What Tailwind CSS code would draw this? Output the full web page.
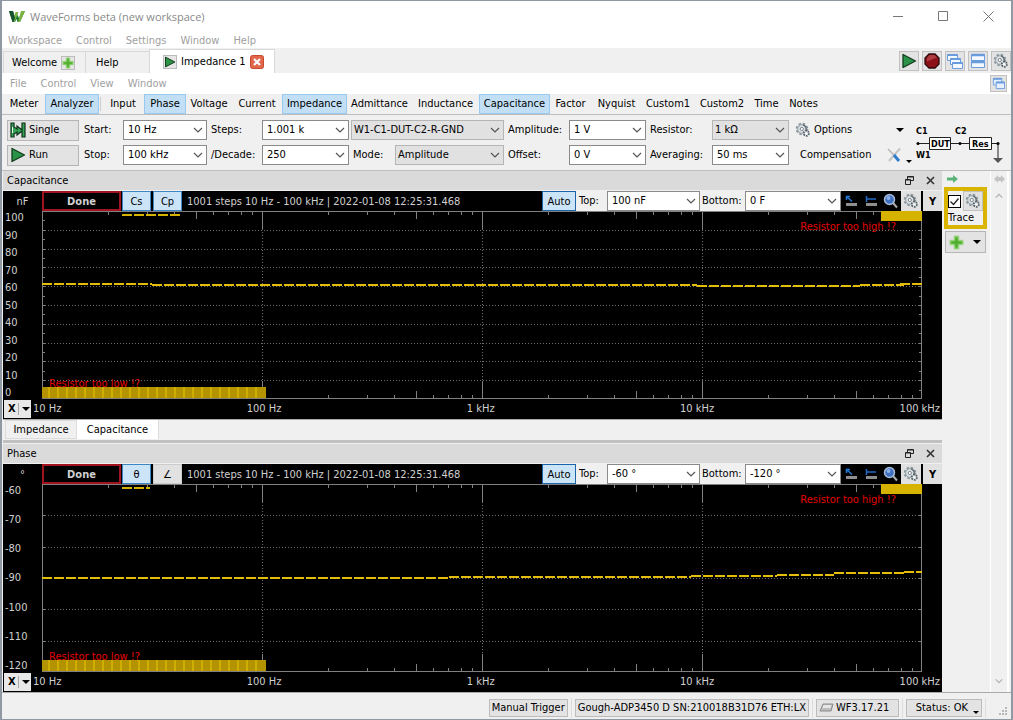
<!DOCTYPE html>
<html lang="en">
  <head>
    <meta charset="UTF-8" />
    <meta name="viewport" content="width=device-width, initial-scale=1.0" />
    <script src="https://cdn.jsdelivr.net/npm/@tailwindcss/browser@4"></script>
    <title>WaveForms beta (new workspace)</title>
  </head>
  <body
    class="flex min-h-screen flex-col border-t border-r-2 border-b border-l-2 border-[#8f98a3] bg-[#f0f0f0] font-['DejaVu_Sans_Condensed','DejaVu_Sans',sans-serif] text-[11px] leading-4 text-black"
  >
    <!-- shared icons -->
    <svg class="hidden">
      <symbol id="chevron" viewBox="0 0 10 6">
        <path d="M1 1l4 4 4-4" fill="none" stroke="#555" stroke-width="1.2" />
      </symbol>
      <symbol id="caret" viewBox="0 0 8 4">
        <path d="M0 0h8L4 4z" />
      </symbol>
      <symbol id="play" viewBox="0 0 16 16">
        <path d="M2 1.500L14.500 8 2 14.500z" fill="#2b9348" stroke="#123c1c" stroke-width="1.300" stroke-linejoin="round" />
      </symbol>
      <symbol id="single" viewBox="0 0 16 16">
        <path d="M1 1h3v4l3 2V4l5 4V1h3v14h-3V9l-5 4v-3l-3 2v3H1z" fill="#35a355" stroke="#10301a" stroke-width="1.200" />
        <path d="M2.500 5v6" stroke="#e8f6ec" />
      </symbol>
      <symbol id="stop" viewBox="0 0 16 16">
        <path d="M5 1h6l4 4v6l-4 4H5l-4-4V5z" fill="#8c1118" stroke="#2c0c0e" stroke-width="1.300" />
        <path d="M5.500 2h5l2.500 2.500-10 4V5z" fill="#c65a5e" opacity=".6" />
      </symbol>
      <symbol id="gear" viewBox="0 0 16 16">
        <circle cx="7" cy="7" r="5.200" fill="#cfd6da" stroke="#8d989e" stroke-width="2.200" stroke-dasharray="2.400 1.700" />
        <circle cx="7" cy="7" r="4.300" fill="#dbe1e4" stroke="#9aa5ab" />
        <path d="M8 2.800a4.300 4.300 0 0 1 3 5.500" fill="none" stroke="#5d686e" stroke-width="1.300" />
        <circle cx="6.800" cy="7" r="1.600" fill="#fff" stroke="#7a858b" />
        <circle cx="11.300" cy="11.300" r="2.600" fill="#e3e8ea" stroke="#566168" stroke-width="1.800" stroke-dasharray="1.700 1" />
        <circle cx="11.300" cy="11.300" r="1" fill="#fff" />
      </symbol>
      <symbol id="plus" viewBox="0 0 16 16">
        <path d="M5.500 1h5v4.500H15v5h-4.500V15h-5v-4.500H1v-5h4.500z" fill="#6cc04a" stroke="#a9dc94" stroke-width="1" />
        <path d="M8 3v10M3 8h10" stroke="#4fae2e" stroke-width="2" />
      </symbol>
      <symbol id="cascade" viewBox="0 0 16 16">
        <g fill="#f4f9ff" stroke="#6a9bdc">
          <path d="M.5 1.500h10v6H.5z" /><path d="M.5 2h10" stroke-width="2" />
          <path d="M3.500 5.500h10v6h-10z" /><path d="M3.500 6h10" stroke-width="2" />
          <path d="M5.500 9.500h10v6h-10z" /><path d="M5.500 10h10" stroke-width="2" />
        </g>
      </symbol>
      <symbol id="tile" viewBox="0 0 16 16">
        <g fill="#f4f9ff" stroke="#6a9bdc">
          <path d="M1.500 1.500h13v6h-13z" /><path d="M1.500 2h13" stroke-width="2.500" />
          <path d="M1.500 8.500h13v6h-13z" /><path d="M1.500 9h13" stroke-width="2.500" />
        </g>
      </symbol>
      <symbol id="windows" viewBox="0 0 14 14">
        <g fill="#e6f1ff" stroke="#6a9bdc">
          <path d="M1.500 1.500h9v7h-9z" /><path d="M1.500 2h9" stroke-width="2" />
          <path d="M4.500 5.500h9v7h-9z" /><path d="M4.500 6h9" stroke-width="2" />
        </g>
      </symbol>
      <symbol id="float" viewBox="0 0 9 9">
        <path d="M2.500 3V.5h6v4H6M2.500 1h6M.5 3.500h5v5h-5zM.5 4h5" fill="none" stroke="#222" />
      </symbol>
      <symbol id="close" viewBox="0 0 9 9">
        <path d="M1 1l7 7M8 1L1 8" stroke="#333" stroke-width="1.600" />
      </symbol>
      <symbol id="cursor-x" viewBox="0 0 14 12">
        <path d="M2.500 1.500l5.500 5M2.500 5V1.500H6" fill="none" stroke="#1f7ad6" stroke-width="1.500" />
        <path d="M2 8h11v3H2z" fill="#8f8f8f" />
      </symbol>
      <symbol id="cursor-y" viewBox="0 0 14 12">
        <path d="M2.500 1v6M2.500 4H12" fill="none" stroke="#1f6ac6" stroke-width="1.500" />
        <path d="M2 8h11v3H2z" fill="#8f8f8f" />
      </symbol>
      <symbol id="lens" viewBox="0 0 16 16">
        <path d="M10 10l4 4.500" stroke="#aaa" stroke-width="2" />
        <circle cx="6.500" cy="6.500" r="5" fill="#3f6fc0" stroke="#a8bcd8" stroke-width="1.500" />
        <circle cx="5.500" cy="5" r="2" fill="#8fb2e6" />
      </symbol>
    </svg>

    <!-- title bar -->
    <header class="flex h-[31px] items-center bg-white pl-[6px]">
      <svg class="h-[13px] w-[18px]" viewBox="0 0 18 13">
        <path d="M1 1h4l2 7 2-4 2 4 3-7h3l-5 11H9.500L8.500 9l-1.500 3H4.500z" fill="#1d7a35" />
        <path d="M7.500 2h3l-4 10H4.500zM13 1h4l-5 11h-2z" fill="#7cb342" />
        <path d="M1 1h4l2 7-1.500 4h-1z" fill="#14532d" />
      </svg>
      <h1 class="ml-1 flex-1 font-['Open_Sans',sans-serif] text-[11px] text-[#8a8a8a]">WaveForms beta (new workspace)</h1>
      <div class="flex">
        <button class="flex h-6 w-[45px] items-center justify-center" aria-label="Minimize">
          <svg class="h-[11px] w-[11px]" viewBox="0 0 11 11"><path d="M0 5.500h10" stroke="#777" /></svg>
        </button>
        <button class="flex h-6 w-[45px] items-center justify-center" aria-label="Maximize">
          <svg class="h-[11px] w-[11px]" viewBox="0 0 11 11"><path d="M.5.5h9v9h-9z" fill="none" stroke="#777" /></svg>
        </button>
        <button class="flex h-6 w-[45px] items-center justify-center" aria-label="Close">
          <svg class="h-[11px] w-[11px]" viewBox="0 0 11 11"><path d="M.5.5l10 10M10.500.5l-10 10" stroke="#777" /></svg>
        </button>
      </div>
    </header>
    <nav class="flex h-4 items-center gap-[14px] bg-white pt-[2px] pl-[6px] text-[#a0a0a0]">
      <button>Workspace</button>
      <button>Control</button>
      <button>Settings</button>
      <button>Window</button>
      <button>Help</button>
    </nav>

    <!-- instrument tabs -->
    <div class="flex h-[25px] items-stretch pl-[1px]">
      <button class="mt-[3px] flex w-[83px] items-center gap-1 border border-b-0 border-[#d9d9d9] pl-2">
        Welcome
        <span class="border border-[#bbb] bg-[#e6e6e6]"><svg class="h-3 w-3"><use href="#plus" /></svg></span>
      </button>
      <button class="mt-[3px] flex w-[63px] items-center border-t border-[#d9d9d9] pl-[10px]">Help</button>
      <button class="mt-[1px] flex w-[126px] items-center gap-1 border border-b-0 border-[#d9d9d9] bg-white pl-[13px]">
        <span class="border border-[#bbb] bg-[#e6e6e6]"><svg class="h-3 w-3"><use href="#play" /></svg></span>
        Impedance 1
        <svg class="h-[14px] w-[14px]" viewBox="0 0 14 14">
          <rect x=".5" y=".5" width="13" height="13" rx="2" fill="#e2664a" stroke="#c9492f" />
          <path d="M4 4l6 6M10 4l-6 6" stroke="#fff" stroke-width="2.200" />
        </svg>
      </button>
      <div class="ml-auto flex items-center gap-[3px] pt-[1px]">
        <button class="flex h-5 w-5 items-center justify-center border border-[#c0c0c0] bg-[#e3e3e3]" aria-label="Run all"><svg class="h-4 w-4"><use href="#play" /></svg></button>
        <button class="flex h-5 w-5 items-center justify-center border border-[#c0c0c0] bg-[#e3e3e3]" aria-label="Stop all"><svg class="h-4 w-4"><use href="#stop" /></svg></button>
        <button class="flex h-5 w-5 items-center justify-center border border-[#c0c0c0] bg-[#e3e3e3]" aria-label="Cascade"><svg class="h-4 w-4"><use href="#cascade" /></svg></button>
        <button class="flex h-5 w-5 items-center justify-center border border-[#c0c0c0] bg-[#e3e3e3]" aria-label="Tile"><svg class="h-4 w-4"><use href="#tile" /></svg></button>
        <button class="flex h-5 w-5 items-center justify-center border border-[#c0c0c0] bg-[#e3e3e3]" aria-label="Settings"><svg class="h-4 w-4"><use href="#gear" /></svg></button>
      </div>
    </div>

    <nav class="flex h-[21px] items-center gap-[14px] bg-white pr-1 pl-2 text-[#a0a0a0]">
      <button>File</button>
      <button>Control</button>
      <button>View</button>
      <button>Window</button>
      <button class="ml-auto flex h-[17px] w-[17px] items-center justify-center border border-[#c0c0c0] bg-[#e3e3e3]" aria-label="Undock"><svg class="h-[13px] w-[13px]"><use href="#windows" /></svg></button>
    </nav>

    <!-- views -->
    <div class="flex h-[21px] items-stretch border-b border-[#bdbdbd] pl-[1px]">
      <button class="w-[42px]">Meter</button>
      <button class="w-[54px] border border-[#99c9ee] bg-[#c2dff5]">Analyzer</button>
      <span class="mx-[1px] my-[3px] w-px bg-[#ccc]"></span>
      <button class="w-[42px]">Input</button>
      <button class="w-[42px] border border-[#99c9ee] bg-[#c2dff5]">Phase</button>
      <button class="w-[46px]">Voltage</button>
      <button class="w-[50px]">Current</button>
      <button class="w-[65px] border border-[#99c9ee] bg-[#c2dff5]">Impedance</button>
      <button class="w-[65px]">Admittance</button>
      <button class="w-[67px]">Inductance</button>
      <button class="w-[71px] border border-[#99c9ee] bg-[#c2dff5]">Capacitance</button>
      <button class="w-[41px]">Factor</button>
      <button class="w-[51px]">Nyquist</button>
      <button class="w-[52px]">Custom1</button>
      <button class="w-[56px]">Custom2</button>
      <button class="w-[33px]">Time</button>
      <button class="w-[41px]">Notes</button>
    </div>

    <!-- sweep settings -->
    <div class="flex h-[56px] items-center border-b border-[#bdbdbd] bg-[#f0f0f0] pl-[5px]">
      <div class="flex w-[77px] flex-col gap-1">
        <button class="flex h-[21px] w-[72px] items-center gap-[3px] border border-[#b5b5b5] bg-[#e3e3e3] pl-[2px]"><svg class="h-4 w-4"><use href="#single" /></svg>Single</button>
        <button class="flex h-[21px] w-[72px] items-center gap-[3px] border border-[#b5b5b5] bg-[#e3e3e3] pl-[2px]"><svg class="h-4 w-4"><use href="#play" /></svg>Run</button>
      </div>
      <div class="mr-1 grid grid-cols-[39px_84px] items-center gap-y-[5px]">
        <label for="start">Start:</label>
        <div class="relative">
          <select id="start" class="block h-5 w-full appearance-none border border-[#8a8a8a] bg-white pl-[4px]"><option>10 Hz</option></select>
          <svg class="pointer-events-none absolute top-[7px] right-1 h-[6px] w-[10px]"><use href="#chevron" /></svg>
        </div>
        <label for="stop-freq">Stop:</label>
        <div class="relative">
          <select id="stop-freq" class="block h-5 w-full appearance-none border border-[#8a8a8a] bg-white pl-[4px]"><option>100 kHz</option></select>
          <svg class="pointer-events-none absolute top-[7px] right-1 h-[6px] w-[10px]"><use href="#chevron" /></svg>
        </div>
      </div>
      <div class="mr-[2px] grid grid-cols-[51px_87px] items-center gap-y-[5px]">
        <label for="steps">Steps:</label>
        <div class="relative">
          <select id="steps" class="block h-5 w-full appearance-none border border-[#8a8a8a] bg-white pl-[4px]"><option>1.001 k</option></select>
          <svg class="pointer-events-none absolute top-[7px] right-1 h-[6px] w-[10px]"><use href="#chevron" /></svg>
        </div>
        <label for="decade">/Decade:</label>
        <div class="relative">
          <select id="decade" class="block h-5 w-full appearance-none border border-[#8a8a8a] bg-white pl-[4px]"><option>250</option></select>
          <svg class="pointer-events-none absolute top-[7px] right-1 h-[6px] w-[10px]"><use href="#chevron" /></svg>
        </div>
      </div>
      <div class="mr-1 flex w-[153px] flex-col gap-[5px]">
        <div class="relative">
          <select aria-label="Circuit" class="block h-5 w-full appearance-none border border-[#b5b5b5] bg-[#e1e1e1] pl-[2px]"><option>W1-C1-DUT-C2-R-GND</option></select>
          <svg class="pointer-events-none absolute top-[7px] right-1 h-[6px] w-[10px]"><use href="#chevron" /></svg>
        </div>
        <div class="flex items-center">
          <label for="mode" class="w-[44px] pl-[2px]">Mode:</label>
          <div class="relative flex-1">
            <select id="mode" class="block h-5 w-full appearance-none border border-[#b5b5b5] bg-[#e1e1e1] pl-[2px]"><option>Amplitude</option></select>
            <svg class="pointer-events-none absolute top-[7px] right-1 h-[6px] w-[10px]"><use href="#chevron" /></svg>
          </div>
        </div>
      </div>
      <div class="mr-1 grid grid-cols-[61px_77px] items-center gap-y-[5px]">
        <label for="amplitude">Amplitude:</label>
        <div class="relative">
          <select id="amplitude" class="block h-5 w-full appearance-none border border-[#8a8a8a] bg-white pl-[4px]"><option>1 V</option></select>
          <svg class="pointer-events-none absolute top-[7px] right-1 h-[6px] w-[10px]"><use href="#chevron" /></svg>
        </div>
        <label for="offset">Offset:</label>
        <div class="relative">
          <select id="offset" class="block h-5 w-full appearance-none border border-[#8a8a8a] bg-white pl-[4px]"><option>0 V</option></select>
          <svg class="pointer-events-none absolute top-[7px] right-1 h-[6px] w-[10px]"><use href="#chevron" /></svg>
        </div>
      </div>
      <div class="mr-[6px] grid grid-cols-[62px_77px] items-center gap-y-[5px]">
        <label for="resistor">Resistor:</label>
        <div class="relative">
          <select id="resistor" class="block h-5 w-full appearance-none border border-[#b5b5b5] bg-[#e1e1e1] pl-[2px]"><option>1 kΩ</option></select>
          <svg class="pointer-events-none absolute top-[7px] right-1 h-[6px] w-[10px]"><use href="#chevron" /></svg>
        </div>
        <label for="averaging">Averaging:</label>
        <div class="relative">
          <select id="averaging" class="block h-5 w-full appearance-none border border-[#8a8a8a] bg-white pl-[4px]"><option>50 ms</option></select>
          <svg class="pointer-events-none absolute top-[7px] right-1 h-[6px] w-[10px]"><use href="#chevron" /></svg>
        </div>
      </div>
      <div class="flex w-[119px] flex-col gap-[5px]">
        <button class="flex h-5 items-center gap-[3px] pr-[10px]">
          <svg class="h-4 w-4"><use href="#gear" /></svg>Options
          <svg class="ml-auto h-1 w-2"><use href="#caret" /></svg>
        </button>
        <button class="flex h-5 items-center pl-[5px]">
          Compensation
          <svg class="ml-auto h-4 w-4" viewBox="0 0 16 16">
            <path d="M14 1.500L3 14" stroke="#c4c4c4" stroke-width="2.200" />
            <path d="M2 2l6 6" stroke="#b5b5b5" stroke-width="1.500" />
            <path d="M8 8l5 6" stroke="#2f7ccc" stroke-width="3" />
          </svg>
          <svg class="mt-3 mr-[2px] ml-1 h-[3px] w-[6px]"><use href="#caret" /></svg>
        </button>
      </div>
      <svg class="h-[42px] w-[92px]" viewBox="0 0 92 42" font-family="DejaVu Sans Condensed" font-size="9" font-weight="bold">
        <path d="M4 21.500h11M37 21.500h18M77 21.500h7v16" fill="none" stroke="#222" />
        <path d="M15.500 15.500h21v12h-21zM55.500 15.500h22v12h-22z" fill="#fff" stroke="#222" />
        <path d="M79 36h10l-5 5z" fill="#555" />
        <circle cx="4" cy="21.500" r="1.500" /><circle cx="46" cy="21.500" r="1.500" /><circle cx="84" cy="21.500" r="1.500" />
        <text x="2" y="12">C1</text>
        <text x="41" y="12">C2</text>
        <text x="2" y="36">W1</text>
        <text x="17" y="25">DUT</text>
        <text x="58" y="25">Res</text>
      </svg>
    </div>

    <main class="flex flex-1">
      <div class="flex min-w-0 flex-1 flex-col pl-[1px]">
        <!-- capacitance -->
        <section class="flex flex-1 flex-col">
          <div class="flex h-5 items-center gap-3 border-b border-[#f0f0f0] bg-[#dadada] pr-[7px] pl-1">
            <h2 class="flex-1 pt-[1px]">Capacitance</h2>
            <button aria-label="Float"><svg class="h-[9px] w-[9px]"><use href="#float" /></svg></button>
            <button aria-label="Close"><svg class="h-[9px] w-[9px]"><use href="#close" /></svg></button>
          </div>
          <div class="flex h-5 items-stretch bg-black text-[#d0d0d0]">
            <span class="w-[39px] pt-[3px] text-center">nF</span>
            <span class="w-[79px] border-2 border-[#a3121f] pt-[1px] text-center font-bold">Done</span>
            <button class="ml-[1px] w-[29px] border border-[#3c86c4] bg-[#cce4f7] pt-[1px] text-black">Cs</button>
            <button class="ml-[2px] w-[29px] border border-[#3c86c4] bg-[#cce4f7] pt-[1px] text-black">Cp</button>
            <span class="ml-[5px] flex-1 pt-[3px] whitespace-nowrap">1001 steps 10 Hz - 100 kHz | 2022-01-08 12:25:31.468</span>
            <button class="w-[34px] border border-[#1c64a8] bg-[#cce4f7] pt-[1px] text-black">Auto</button>
            <label for="c-top" class="w-[31px] bg-[#f0f0f0] pt-[2px] pl-[3px] text-black">Top:</label>
            <div class="relative w-[93px] text-black">
              <select id="c-top" class="block h-5 w-full appearance-none border border-[#8a8a8a] bg-white pl-[4px]"><option>100 nF</option></select>
              <svg class="pointer-events-none absolute top-[7px] right-1 h-[6px] w-[10px]"><use href="#chevron" /></svg>
            </div>
            <label for="c-bottom" class="w-[45px] bg-[#f0f0f0] pt-[2px] pl-[2px] text-black">Bottom:</label>
            <div class="relative w-[96px] text-black">
              <select id="c-bottom" class="block h-5 w-full appearance-none border border-[#8a8a8a] bg-white pl-[4px]"><option>0 F</option></select>
              <svg class="pointer-events-none absolute top-[7px] right-1 h-[6px] w-[10px]"><use href="#chevron" /></svg>
            </div>
            <button class="w-5 pl-[3px]" aria-label="X cursors"><svg class="h-3 w-[14px]"><use href="#cursor-x" /></svg></button>
            <button class="w-5 pl-[3px]" aria-label="Y cursors"><svg class="h-3 w-[14px]"><use href="#cursor-y" /></svg></button>
            <button class="w-5 pl-[2px]" aria-label="Zoom"><svg class="h-4 w-4"><use href="#lens" /></svg></button>
            <button class="w-5 bg-[#e1e1e1] pl-[2px]" aria-label="Plot settings"><svg class="h-4 w-4"><use href="#gear" /></svg></button>
            <button class="ml-[2px] w-[19px] bg-[#e1e1e1] pt-[1px] font-bold text-black">Y</button>
          </div>
          <div class="flex min-h-[120px] flex-1 bg-black pr-5 text-[#d0d0d0]">
            <div class="flex w-[39px] flex-col justify-between pl-[2px] leading-[13px]">
              <span>100</span><span>90</span><span>80</span><span>70</span><span>60</span><span>50</span><span>40</span><span>30</span><span>20</span><span>10</span><span>0</span>
            </div>
            <div class="relative flex-1 text-[#e60000]">
              <span class="absolute bottom-[7px] left-[7px]">Resistor too low !?</span>
              <span class="absolute top-2 right-[26px]">Resistor too high !?</span>
              <svg id="c-plot" class="absolute inset-0 h-full w-full" shape-rendering="crispEdges"></svg>
            </div>
          </div>
          <div class="flex h-5 items-center bg-black pr-[2px] pl-[1px] text-[#d0d0d0]">
            <button class="mr-[2px] flex h-[18px] w-[27px] items-center bg-[#e8e8e8] pl-1 font-bold text-black">
              X<span class="mx-[2px] h-3 w-px bg-[#aaa]"></span><svg class="ml-[1px] h-1 w-2"><use href="#caret" /></svg>
            </button>
            <div class="flex flex-1 justify-between"><span>10 Hz</span><span>100 Hz</span><span>1 kHz</span><span>10 kHz</span><span>100 kHz</span></div>
          </div>
        </section>

        <div class="flex h-5 items-stretch border-t border-[#aaa] pl-[2px]">
          <button class="w-[72px] border border-[#dcdcdc]">Impedance</button>
          <button class="w-[82px] border-r border-[#dcdcdc] bg-white">Capacitance</button>
        </div>
        <div class="h-[5px] border-y-1 border-[#f0f0f0] bg-[#c0c0c0]"></div>

        <!-- phase -->
        <section class="flex flex-1 flex-col">
          <div class="flex h-5 items-center gap-3 border-b border-[#f0f0f0] bg-[#dadada] pr-[7px] pl-1">
            <h2 class="flex-1 pt-[1px]">Phase</h2>
            <button aria-label="Float"><svg class="h-[9px] w-[9px]"><use href="#float" /></svg></button>
            <button aria-label="Close"><svg class="h-[9px] w-[9px]"><use href="#close" /></svg></button>
          </div>
          <div class="flex h-5 items-stretch bg-black text-[#d0d0d0]">
            <span class="w-[39px] pt-[3px] text-center">°</span>
            <span class="w-[79px] border-2 border-[#a3121f] pt-[1px] text-center font-bold">Done</span>
            <button class="ml-[1px] w-[29px] border border-[#3c86c4] bg-[#cce4f7] pt-[1px] text-black">θ</button>
            <button class="ml-[2px] w-[29px] border border-[#ccc] bg-[#e1e1e1] pt-[1px] text-black">∠</button>
            <span class="ml-[5px] flex-1 pt-[3px] whitespace-nowrap">1001 steps 10 Hz - 100 kHz | 2022-01-08 12:25:31.468</span>
            <button class="w-[34px] border border-[#1c64a8] bg-[#cce4f7] pt-[1px] text-black">Auto</button>
            <label for="p-top" class="w-[31px] bg-[#f0f0f0] pt-[2px] pl-[3px] text-black">Top:</label>
            <div class="relative w-[93px] text-black">
              <select id="p-top" class="block h-5 w-full appearance-none border border-[#8a8a8a] bg-white pl-[4px]"><option>-60 °</option></select>
              <svg class="pointer-events-none absolute top-[7px] right-1 h-[6px] w-[10px]"><use href="#chevron" /></svg>
            </div>
            <label for="p-bottom" class="w-[45px] bg-[#f0f0f0] pt-[2px] pl-[2px] text-black">Bottom:</label>
            <div class="relative w-[96px] text-black">
              <select id="p-bottom" class="block h-5 w-full appearance-none border border-[#8a8a8a] bg-white pl-[4px]"><option>-120 °</option></select>
              <svg class="pointer-events-none absolute top-[7px] right-1 h-[6px] w-[10px]"><use href="#chevron" /></svg>
            </div>
            <button class="w-5 pl-[3px]" aria-label="X cursors"><svg class="h-3 w-[14px]"><use href="#cursor-x" /></svg></button>
            <button class="w-5 pl-[3px]" aria-label="Y cursors"><svg class="h-3 w-[14px]"><use href="#cursor-y" /></svg></button>
            <button class="w-5 pl-[2px]" aria-label="Zoom"><svg class="h-4 w-4"><use href="#lens" /></svg></button>
            <button class="w-5 bg-[#e1e1e1] pl-[2px]" aria-label="Plot settings"><svg class="h-4 w-4"><use href="#gear" /></svg></button>
            <button class="ml-[2px] w-[19px] bg-[#e1e1e1] pt-[1px] font-bold text-black">Y</button>
          </div>
          <div class="flex min-h-[120px] flex-1 bg-black pr-5 text-[#d0d0d0]">
            <div class="flex w-[39px] flex-col justify-between pl-[2px] leading-[13px]">
              <span>-60</span><span>-70</span><span>-80</span><span>-90</span><span>-100</span><span>-110</span><span>-120</span>
            </div>
            <div class="relative flex-1 text-[#e60000]">
              <span class="absolute bottom-[7px] left-[7px]">Resistor too low !?</span>
              <span class="absolute top-2 right-[26px]">Resistor too high !?</span>
              <svg id="p-plot" class="absolute inset-0 h-full w-full" shape-rendering="crispEdges"></svg>
            </div>
          </div>
          <div class="flex h-5 items-center bg-black pr-[2px] pl-[1px] text-[#d0d0d0]">
            <button class="mr-[2px] flex h-[18px] w-[27px] items-center bg-[#e8e8e8] pl-1 font-bold text-black">
              X<span class="mx-[2px] h-3 w-px bg-[#aaa]"></span><svg class="ml-[1px] h-1 w-2"><use href="#caret" /></svg>
            </button>
            <div class="flex flex-1 justify-between"><span>10 Hz</span><span>100 Hz</span><span>1 kHz</span><span>10 kHz</span><span>100 kHz</span></div>
          </div>
        </section>
      </div>

      <!-- traces -->
      <aside class="flex w-[49px] flex-col border-r border-white px-[2px]">
        <svg class="my-[3px] ml-[3px] h-[10px] w-[11px]" viewBox="0 0 11 10">
          <path d="M0 3.500h6V1l5 4-5 4V6.500H0z" fill="#5cb37a" />
        </svg>
        <div class="w-[43px] border-4 border-[#d9b400] leading-[14px]">
          <div class="flex items-center justify-between">
            <div class="relative">
              <input id="trace" type="checkbox" checked class="block h-[13px] w-[13px] appearance-none border border-black bg-white" />
              <svg class="pointer-events-none absolute top-[2px] left-[2px] h-[9px] w-[9px]" viewBox="0 0 9 9"><path d="M.5 4.500l3 3 5-6" fill="none" stroke="#222" stroke-width="1.300" /></svg>
            </div>
            <button class="flex h-5 w-5 items-center justify-center border border-[#c0c0c0] bg-[#e1e1e1]" aria-label="Trace settings"><svg class="h-4 w-4"><use href="#gear" /></svg></button>
          </div>
          <label for="trace">Trace</label>
        </div>
        <button class="mt-[2px] ml-[1px] flex h-[22px] w-[41px] items-center justify-between border border-[#b5b5b5] bg-[#e3e3e3] pr-1 pl-[3px]" aria-label="Add trace">
          <svg class="h-[15px] w-[15px]"><use href="#plus" /></svg>
          <svg class="h-1 w-2"><use href="#caret" /></svg>
        </button>
      </aside>
      <div class="mr-[2px] flex w-[18px] flex-col items-center border-r-2 border-white pt-1">
        <svg class="h-2 w-[11px]" viewBox="0 0 11 8"><path d="M0 4l4-4v2h3V0l4 4-4 4V6H4v2z" fill="#c4c4c4" /></svg>
        <svg class="mt-[10px] h-[6px] w-2" viewBox="0 0 10 6"><path d="M1 5l4-4 4 4" fill="none" stroke="#b0b0b0" stroke-width="1.500" /></svg>
        <svg class="mt-auto mb-2 h-[6px] w-2" viewBox="0 0 10 6"><path d="M1 1l4 4 4-4" fill="none" stroke="#b0b0b0" stroke-width="1.500" /></svg>
      </div>
    </main>

    <!-- status bar -->
    <footer class="flex h-[27px] items-center justify-end border-t border-[#aaa] pt-[4px] whitespace-nowrap">
      <button class="h-[18px] border border-[#bcbcbc] bg-[#e3e3e3] px-[2px]">Manual Trigger</button>
      <span class="mx-[3px] h-5 w-px bg-[#ddd]"></span>
      <button class="h-[18px] border border-[#bcbcbc] bg-[#e3e3e3] px-[2px]">Gough-ADP3450 D SN:210018B31D76 ETH:LX</button>
      <span class="mx-[3px] h-5 w-px bg-[#ddd]"></span>
      <button class="flex h-[18px] w-[83px] items-center gap-[2px] border border-[#bcbcbc] bg-[#e3e3e3] pl-[2px]">
        <svg class="h-[10px] w-[15px]" viewBox="0 0 15 10"><path d="M4 1h10l-2 7H1z" fill="#bdbdbd" stroke="#8a8a8a" /><path d="M4.500 2h8l-1 3H3.500z" fill="#e6e6e6" /></svg>
        WF3.17.21
      </button>
      <span class="mx-[3px] h-5 w-px bg-[#ddd]"></span>
      <button class="flex h-[18px] w-[76px] items-center justify-end gap-[5px] border border-[#bcbcbc] bg-[#e3e3e3] pr-[2px]">
        Status: OK
        <svg class="mt-2 h-[3px] w-[6px]"><use href="#caret" /></svg>
      </button>
      <span class="mx-[3px] h-5 w-px bg-[#ddd]"></span>
      <svg class="mt-2 mr-[2px] ml-[10px] h-[10px] w-[10px]" viewBox="0 0 10 10">
        <path d="M6 0h2v2H6zM6 3h2v2H6zM3 3h2v2H3zM6 6h2v2H6zM3 6h2v2H3zM0 6h2v2H0z" fill="#b8b8b8" />
      </svg>
    </footer>

    <script>
      const NS = "http://www.w3.org/2000/svg";

      function add(svg, d, stroke, width, dash) {
        const path = document.createElementNS(NS, "path");
        path.setAttribute("d", d);
        path.setAttribute("fill", "none");
        path.setAttribute("stroke", stroke);
        path.setAttribute("stroke-width", width);
        if (dash) path.setAttribute("stroke-dasharray", dash);
        svg.appendChild(path);
      }

      function rect(svg, x, y, w, h, fill) {
        const r = document.createElementNS(NS, "rect");
        r.setAttribute("x", x);
        r.setAttribute("y", y);
        r.setAttribute("width", w);
        r.setAttribute("height", h);
        r.setAttribute("fill", fill);
        svg.appendChild(r);
      }

      // trace: list of [start, end, y], all as a fraction of the plot
      function draw(id, rows, minor, trace, marks) {
        const svg = document.getElementById(id);
        const w = svg.clientWidth;
        const h = svg.clientHeight;
        svg.replaceChildren();

        for (let i = 1; i < rows; i++) {
          const y = Math.round((h * i) / rows) + 0.5;
          add(svg, `M0 ${y}H${w}`, "#6e6e6e", 1, "1 2");
        }
        for (let i = 0; i < rows * minor; i++) {
          const y = Math.round((h * i) / (rows * minor)) + 0.5;
          add(svg, `M0 ${y}h3M${w} ${y}h-3`, "#808080", 1);
        }
        for (let d = 0; d < 4; d++) {
          for (let n = 1; n < 10; n++) {
            const x = Math.round((w * (d + Math.log10(n))) / 4) + 0.5;
            const len = n === 1 ? 18 : n === 5 ? 8 : 4;
            if (n === 1 && d > 0) add(svg, `M${x} 0V${h}`, "#6e6e6e", 1, "1 2");
            add(svg, `M${x} 0v${len}M${x} ${h}v-${len}`, "#808080", 1);
          }
        }
        add(svg, `M.5 .5H${w - 0.5}V${h - 0.5}H.5z`, "#808080", 1);

        rect(svg, 0, h - 12, w * 0.255, 11, "#b39300");
        for (let x = 6; x < w * 0.25; x += 9) {
          rect(svg, x, h - 12, 2, 11, "#cfae00");
        }
        rect(svg, w * 0.953, 0, w * 0.047, 10, "#d6b300");

        for (const [from, to, y] of trace) {
          add(svg, `M${Math.round(from * w)} ${Math.round(y * h)}H${Math.round(to * w)}`, "#e3bd08", 2, "10 2");
        }
        add(svg, `M80 4H${marks}`, "#d6b300", 2, "10 2");
      }

      function drawAll() {
        draw("c-plot", 10, 2, [
          [0, 0.125, 0.39],
          [0.125, 0.744, 0.395],
          [0.744, 0.93, 0.4],
          [0.93, 0.98, 0.395],
          [0.975, 1, 0.39],
        ], 139);
        draw("p-plot", 6, 1, [
          [0, 0.463, 0.498],
          [0.463, 0.737, 0.493],
          [0.737, 0.835, 0.487],
          [0.835, 0.9, 0.482],
          [0.9, 0.955, 0.476],
          [0.955, 0.98, 0.471],
          [0.98, 1, 0.466],
        ], 108);
      }

      drawAll();
      window.addEventListener("load", drawAll);
      const observer = new ResizeObserver(drawAll);
      observer.observe(document.getElementById("c-plot"));
      observer.observe(document.getElementById("p-plot"));
    </script>
  </body>
</html>
